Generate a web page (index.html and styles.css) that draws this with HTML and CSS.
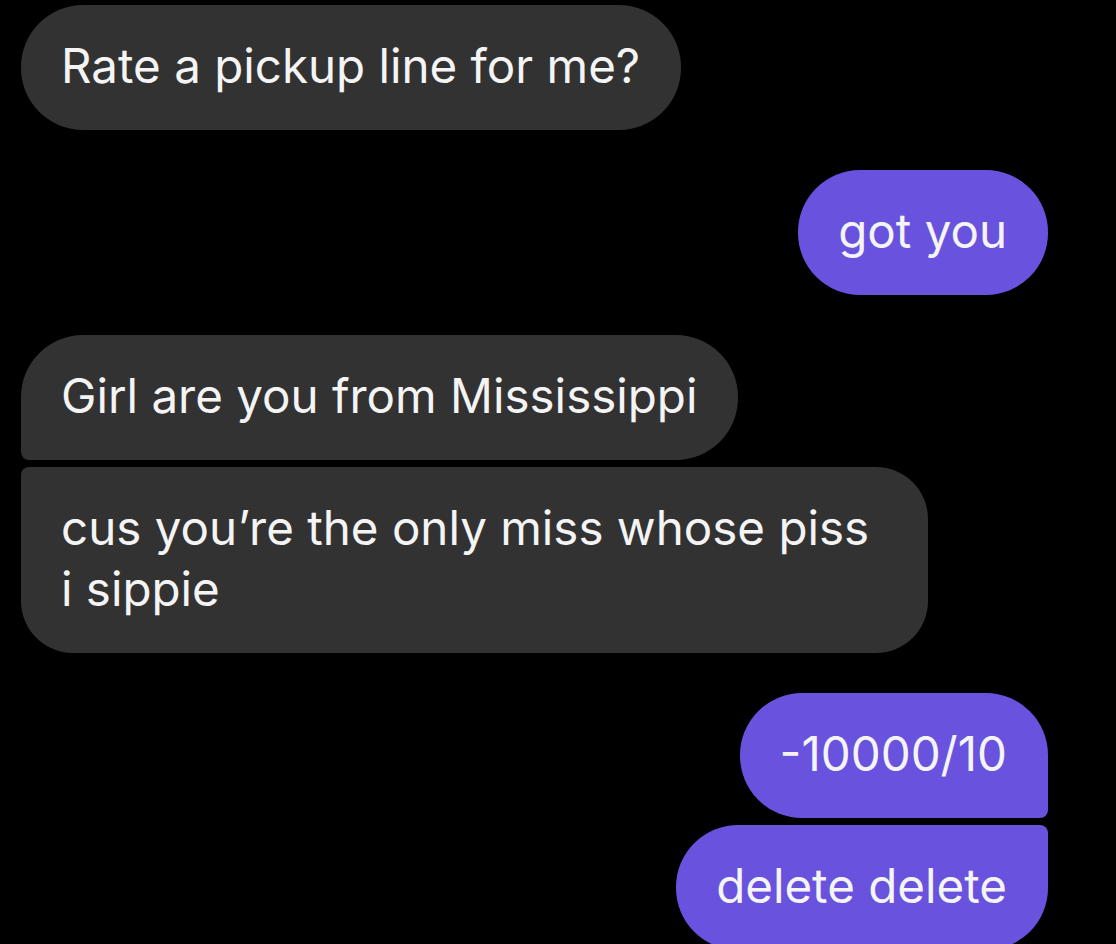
FILE: index.html
```html
<!DOCTYPE html>
<html lang="en">
<head>
<meta charset="utf-8">
<title>Chat</title>
<link rel="stylesheet" href="styles.css">
</head>
<body>
<main class="chat">
  <div class="group group-in">
    <div class="bubble in">Rate a pickup line for me?</div>
  </div>
  <div class="group group-out">
    <div class="bubble out">got you</div>
  </div>
  <div class="group group-in">
    <div class="bubble in first">Girl are you from Mississippi</div>
    <div class="bubble in last">cus you’re the only miss whose piss i sippie</div>
  </div>
  <div class="group group-out">
    <div class="bubble out first">-10000/10</div>
    <div class="bubble out last">delete delete</div>
  </div>
</main>
</body>
</html>
```
FILE: styles.css
```css
html, body {
  margin: 0;
  padding: 0;
  background: #000;
}
body {
  width: 1116px;
  height: 944px;
  overflow: hidden;
  font-family: "Inter", "Roboto", sans-serif;
}
.chat {
  display: flex;
  flex-direction: column;
  gap: 40px;
  padding: 5px 68px 0 21px;
}
.group {
  display: flex;
  flex-direction: column;
  gap: 7px;
}
.group-in { align-items: flex-start; }
.group-out { align-items: flex-end; }
.bubble {
  box-sizing: border-box;
  max-width: 907px;
  padding: 30px 41px 34px 40px;
  font-size: 47.5px;
  line-height: 61px;
  color: #f4f4f4;
  border-radius: 62px;
}
.in { background: #323232; }
.out { background: #6952de; }
.in.first { border-bottom-left-radius: 8px; }
.in.last { border-radius: 8px 52px 52px 52px; }
.out.first { border-bottom-right-radius: 8px; }
.out.last { border-top-right-radius: 8px; }
```
